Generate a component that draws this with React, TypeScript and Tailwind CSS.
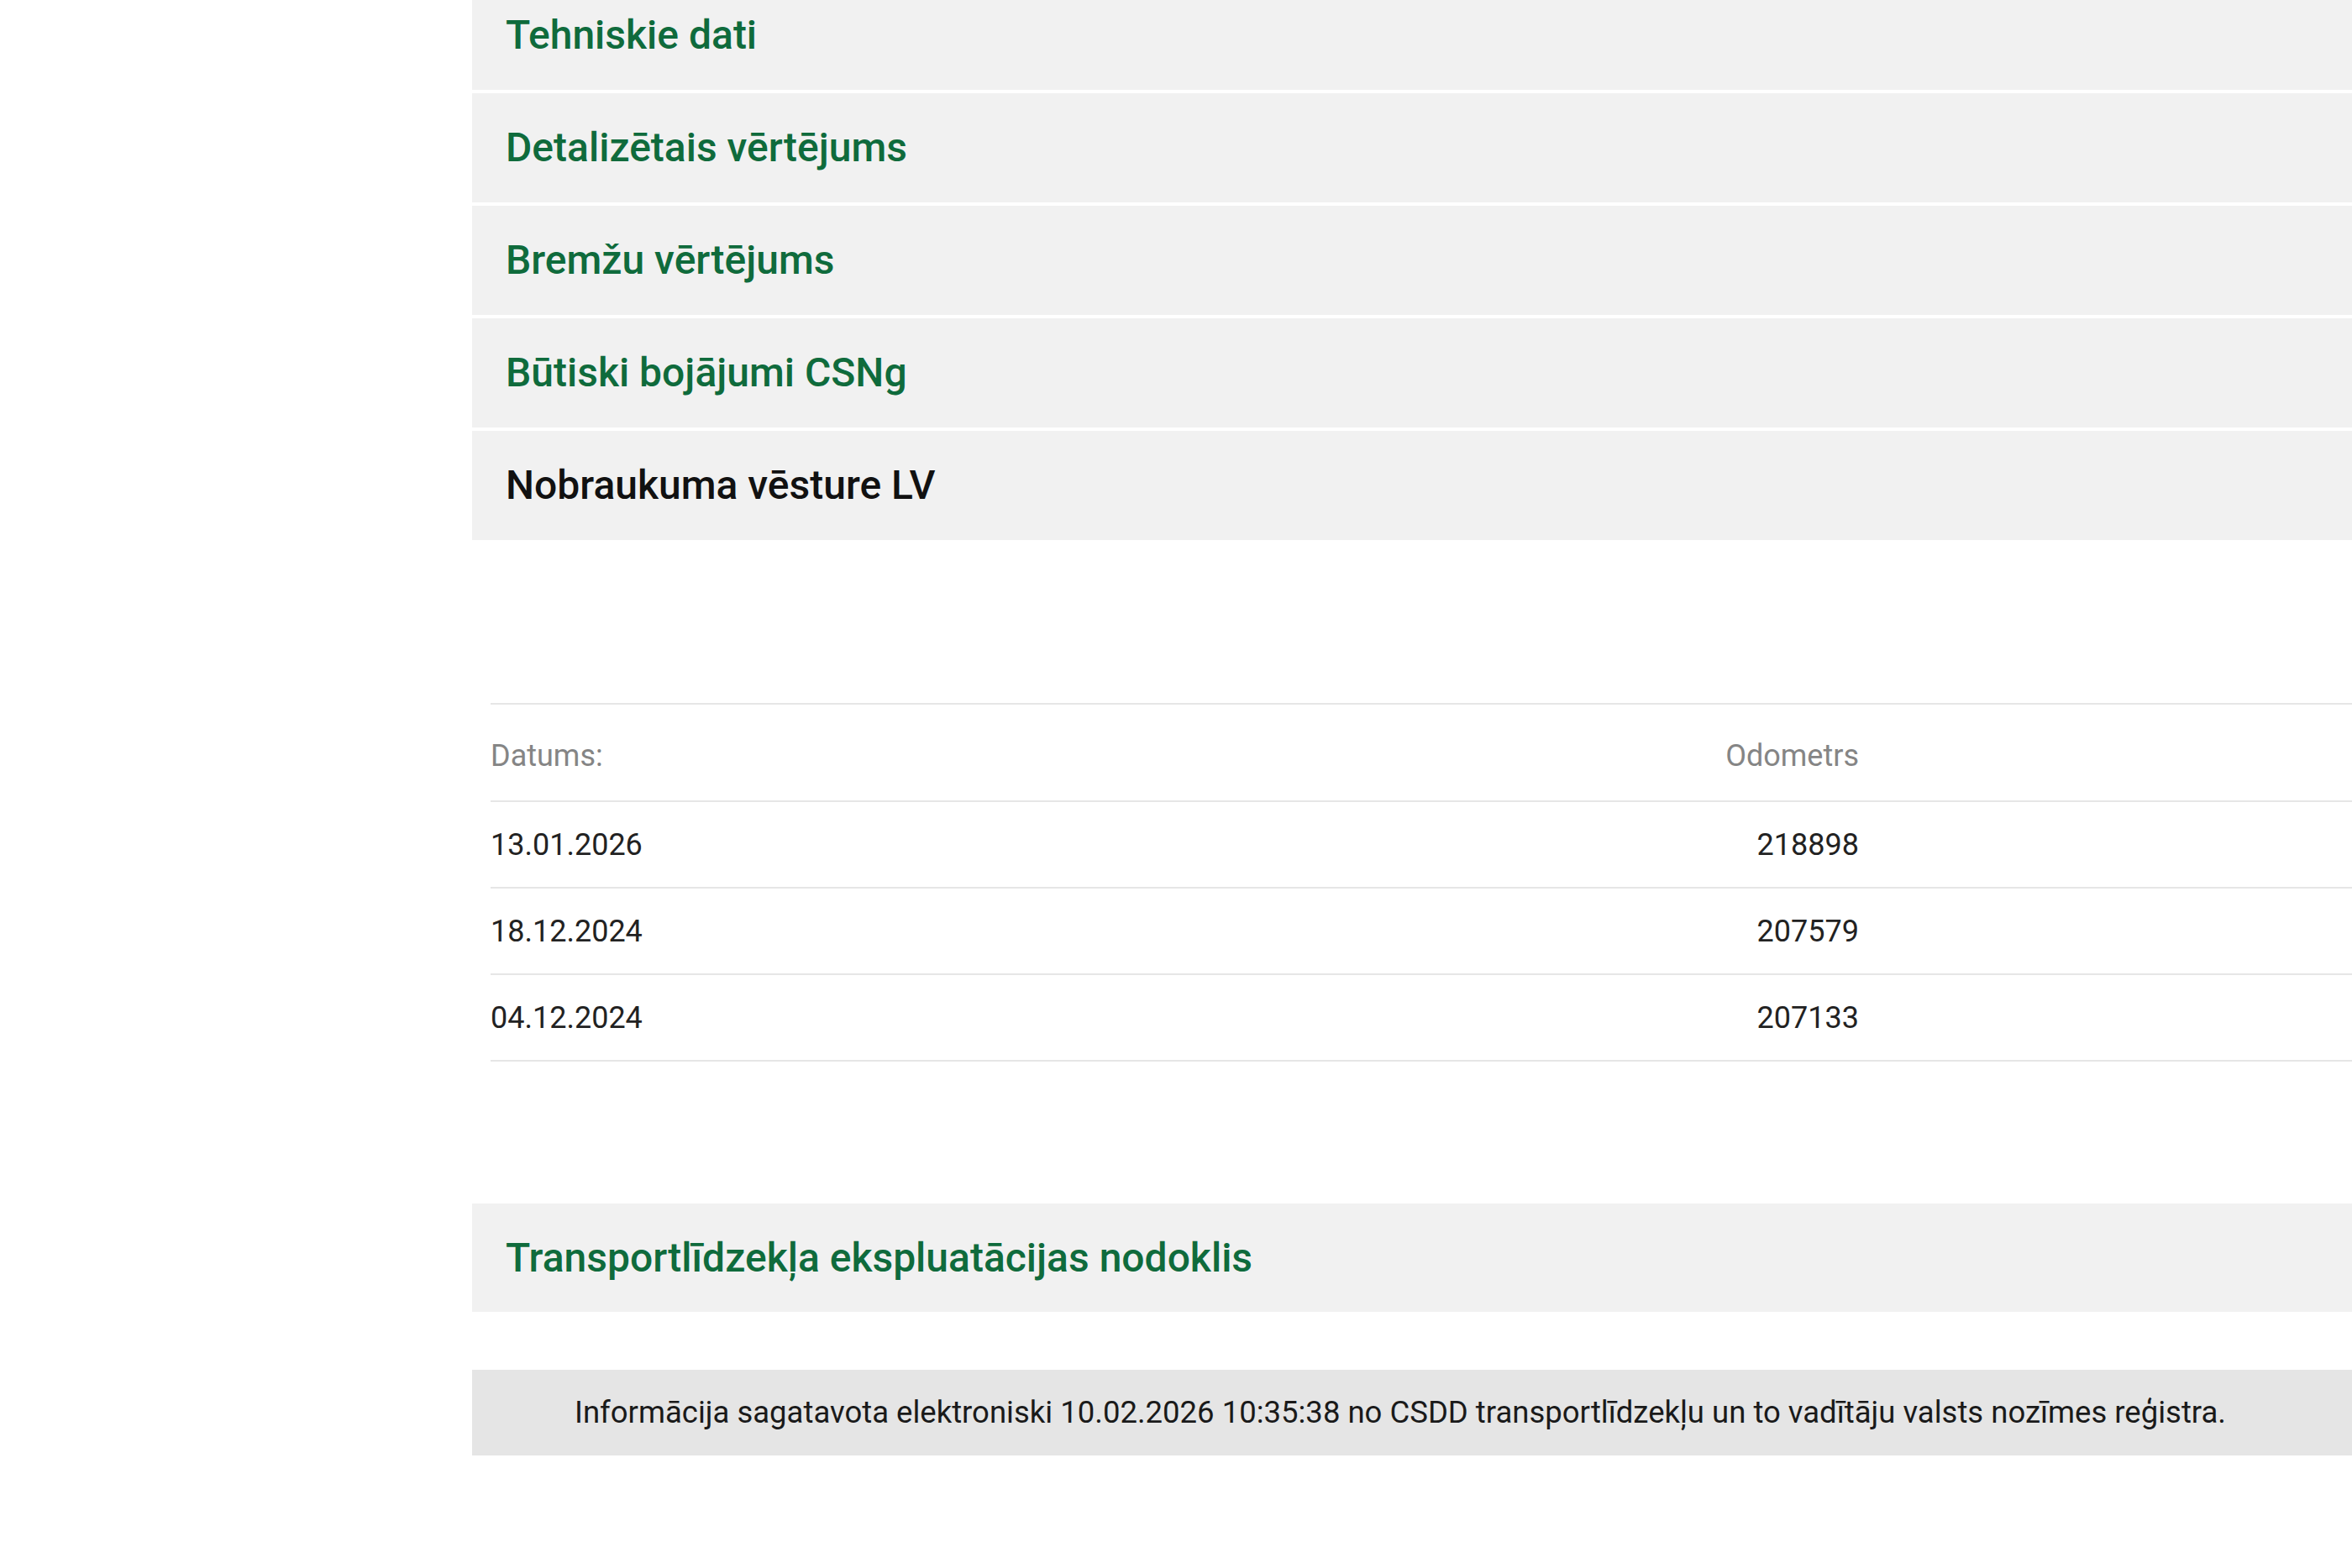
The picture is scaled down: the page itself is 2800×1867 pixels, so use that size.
import React from 'react';

const sections = [
  { title: 'Tehniskie dati', active: false },
  { title: 'Detalizētais vērtējums', active: false },
  { title: 'Bremžu vērtējums', active: false },
  { title: 'Būtiski bojājumi CSNg', active: false },
  { title: 'Nobraukuma vēsture LV', active: true },
];

const mileage = [
  { date: '13.01.2026', odo: '218898' },
  { date: '18.12.2024', odo: '207579' },
  { date: '04.12.2024', odo: '207133' },
];

export default function App() {
  return (
    <div className="min-h-screen bg-white font-['Roboto',sans-serif] overflow-hidden">
      <div className="ml-[562px] flex flex-col">
        <div className="-mt-[23px] flex flex-col gap-[4px]">
          {sections.map((s) => (
            <div key={s.title} className="h-[130px] bg-[#f1f1f1] flex items-center pl-[40px]">
              <span
                className={
                  'text-[48px] font-medium ' + (s.active ? 'text-[#111111]' : 'text-[#0f6b3c]')
                }
              >
                {s.title}
              </span>
            </div>
          ))}
        </div>

        <div className="mt-[194px] ml-[22px] border-t-2 border-[#e6e6e6] text-[36px]">
          <div className="h-[116px] pt-[8px] flex items-center border-b-2 border-[#e6e6e6] text-[#858585]">
            <div className="flex-1">Datums:</div>
            <div className="w-[300px] text-right mr-[587px]">Odometrs</div>
          </div>
          {mileage.map((m) => (
            <div key={m.date} className="h-[103px] flex items-center border-b-2 border-[#e6e6e6] text-[#222222]">
              <div className="flex-1">{m.date}</div>
              <div className="w-[300px] text-right mr-[587px]">{m.odo}</div>
            </div>
          ))}
        </div>

        <div className="mt-[169px] h-[129px] bg-[#f1f1f1] flex items-center pl-[40px]">
          <span className="text-[48px] font-medium text-[#0f6b3c]">
            Transportlīdzekļa ekspluatācijas nodoklis
          </span>
        </div>

        <div className="mt-[69px] h-[102px] bg-[#e5e5e5] flex items-center justify-center">
          <span className="text-[36.5px] text-[#1a1a1a] pr-[28px] whitespace-nowrap">
            Informācija sagatavota elektroniski 10.02.2026 10:35:38 no CSDD transportlīdzekļu un to vadītāju valsts nozīmes reģistra.
          </span>
        </div>
      </div>
    </div>
  );
}
